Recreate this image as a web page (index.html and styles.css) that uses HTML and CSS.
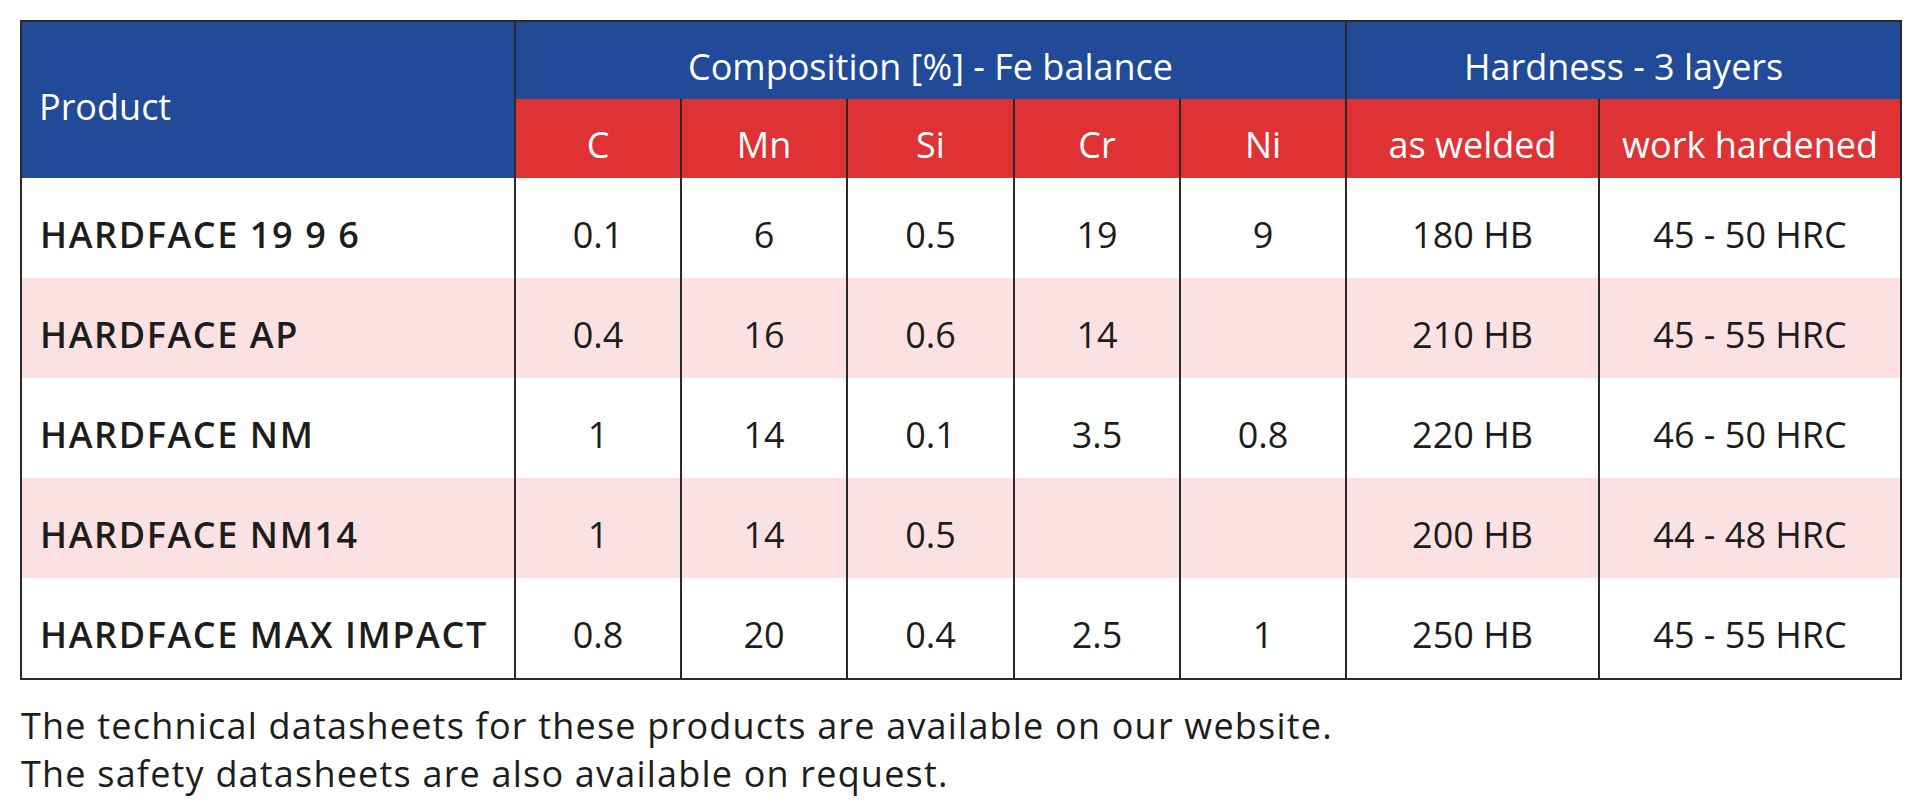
FILE: index.html
```html
<!DOCTYPE html>
<html lang="en">
<head>
<meta charset="utf-8">
<title>Hardface products</title>
<link rel="stylesheet" href="styles.css">
</head>
<body>
<div class="page">
  <table class="spec">
    <colgroup>
      <col class="c-prod"><col class="c-el"><col class="c-el"><col class="c-el3"><col class="c-el"><col class="c-el"><col class="c-aw"><col class="c-wh">
    </colgroup>
    <thead>
      <tr class="h1">
        <th class="prod-head" rowspan="2">Product</th>
        <th class="blue" colspan="5">Composition [%] - Fe balance</th>
        <th class="blue" colspan="2">Hardness - 3 layers</th>
      </tr>
      <tr class="h2">
        <th class="red">C</th>
        <th class="red">Mn</th>
        <th class="red">Si</th>
        <th class="red">Cr</th>
        <th class="red">Ni</th>
        <th class="red">as welded</th>
        <th class="red">work hardened</th>
      </tr>
    </thead>
    <tbody>
      <tr class="r-odd">
        <td class="name">HARDFACE 19 9 6</td><td>0.1</td><td>6</td><td>0.5</td><td>19</td><td>9</td><td>180 HB</td><td>45 - 50 HRC</td>
      </tr>
      <tr class="r-even">
        <td class="name">HARDFACE AP</td><td>0.4</td><td>16</td><td>0.6</td><td>14</td><td></td><td>210 HB</td><td>45 - 55 HRC</td>
      </tr>
      <tr class="r-odd">
        <td class="name">HARDFACE NM</td><td>1</td><td>14</td><td>0.1</td><td>3.5</td><td>0.8</td><td>220 HB</td><td>46 - 50 HRC</td>
      </tr>
      <tr class="r-even">
        <td class="name">HARDFACE NM14</td><td>1</td><td>14</td><td>0.5</td><td></td><td></td><td>200 HB</td><td>44 - 48 HRC</td>
      </tr>
      <tr class="r-odd">
        <td class="name">HARDFACE MAX IMPACT</td><td>0.8</td><td>20</td><td>0.4</td><td>2.5</td><td>1</td><td>250 HB</td><td>45 - 55 HRC</td>
      </tr>
    </tbody>
  </table>
  <p class="note">The technical datasheets for these products are available on our website.<br>The safety datasheets are also available on request.</p>
</div>
</body>
</html>
```

FILE: styles.css
```css
html, body {
  margin: 0;
  padding: 0;
  background: #ffffff;
}
.page {
  padding: 20px 21px 0 20px;
  font-family: "Open Sans", "Noto Sans", sans-serif;
  color: #1d1d1b;
}
.spec {
  border-collapse: collapse;
  table-layout: fixed;
  width: 1879px;
  border: 2px solid #2a2a2a;
}
.c-prod { width: 494px; }
.c-el { width: 166px; }
.c-el3 { width: 167px; }
.c-aw { width: 253px; }
.c-wh { width: 302px; }
.spec th,
.spec td {
  padding: 13px 0 0 0;
  text-align: center;
  font-size: 36px;
  line-height: 40px;
  white-space: nowrap;
  border-left: 2px solid #2a2a2a;
  border-right: 2px solid #2a2a2a;
}
.spec th {
  font-weight: 400;
  color: #ffffff;
}
.h1 th { height: 64px; }
.h2 th { height: 66px; }
.prod-head {
  background: #214a99;
  text-align: left !important;
  padding-left: 17px !important;
}
.blue { background: #214a99; }
.red { background: #df3234; }
.spec tbody td {
  height: 87px;
  font-weight: 400;
}
.r-odd td { background: #ffffff; }
.r-even td { background: #fce1e3; }
.spec td.name {
  text-align: left;
  padding-left: 18px;
  font-weight: 600;
  letter-spacing: 1.6px;
}
.note {
  margin: 22px 0 0 1px;
  font-size: 36px;
  line-height: 48px;
  letter-spacing: 1.2px;
}
```
